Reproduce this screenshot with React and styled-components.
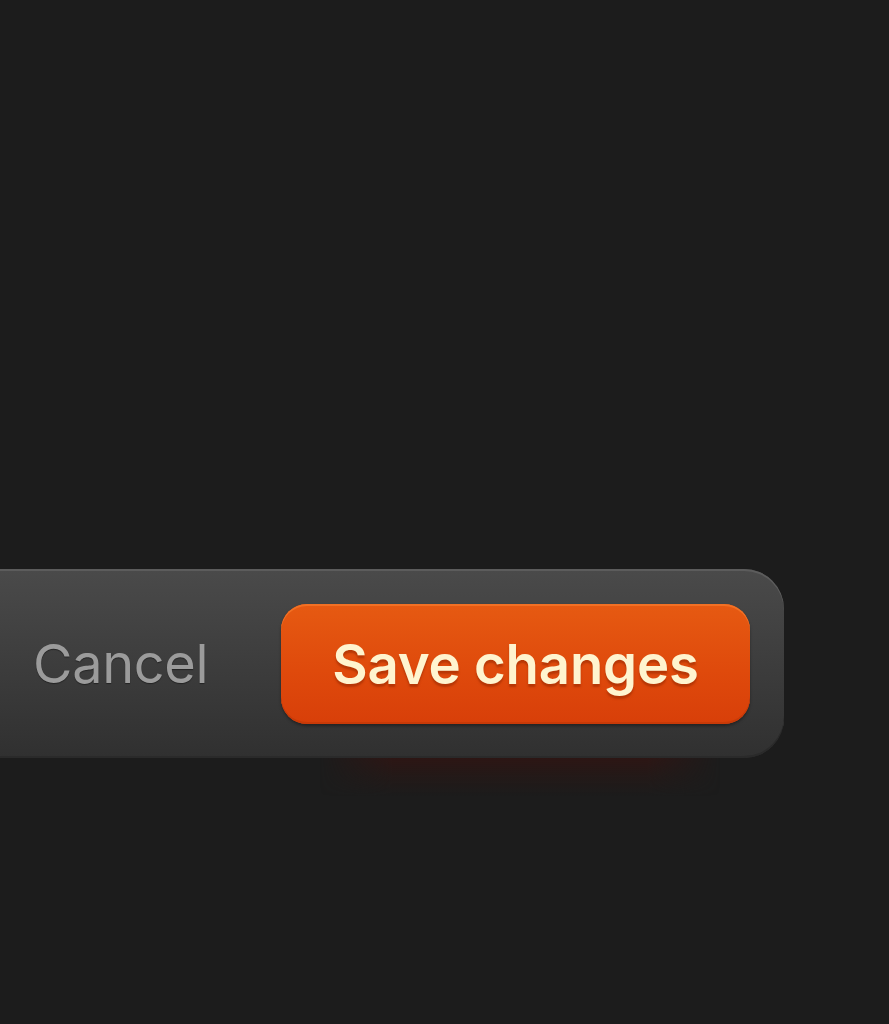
import React from 'react';
import styled, { createGlobalStyle } from 'styled-components';

const GlobalStyle = createGlobalStyle`
    html, body {
        margin: 0;
        padding: 0;
        background: #1c1c1c;
    }
    body {
        font-family: Inter, 'Noto Sans', sans-serif;
        overflow: hidden;
    }
`;

const Page = styled.div`
    width: 889px;
    height: 1024px;
    padding-top: 569px;
    box-sizing: border-box;
    background: #1c1c1c;
`;

const ActionBar = styled.div`
    position: relative;
    margin-left: -60px;
    width: 844px;
    height: 189px;
    box-sizing: border-box;
    display: flex;
    align-items: center;
    justify-content: space-between;
    padding: 0 34px 0 93px;
    border-radius: 0 40px 40px 0;
    background: linear-gradient(180deg, #4a4a4a 0%, #3d3d3d 50%, #303030 100%);
    box-shadow: inset 0 2px 0 #5c5c5c, inset 0 -2px 0 #2a2a2a;
    isolation: isolate;

    &::after {
        content: '';
        position: absolute;
        left: 380px;
        width: 400px;
        top: 189px;
        height: 38px;
        background: linear-gradient(180deg, rgba(46, 22, 20, 0.95) 0%, rgba(40, 24, 22, 0.6) 50%, rgba(28, 28, 28, 0) 100%);
        -webkit-mask-image: linear-gradient(90deg, transparent 0%, #000 18%, #000 82%, transparent 100%);
        mask-image: linear-gradient(90deg, transparent 0%, #000 18%, #000 82%, transparent 100%);
        z-index: -1;
    }
`;

const CancelButton = styled.button`
    background: none;
    border: none;
    padding: 0;
    font-family: Inter, 'Noto Sans', sans-serif;
    font-size: 54px;
    font-weight: 400;
    letter-spacing: -0.3px;
    color: #9b9b9b;
    text-shadow: 0 1px 1px rgba(0, 0, 0, 0.4);
    cursor: pointer;
`;

const SaveButton = styled.button`
    width: 469px;
    height: 120px;
    border: none;
    border-radius: 26px;
    background: linear-gradient(180deg, #e65a12 0%, #df4a0c 55%, #d83f09 100%);
    box-shadow: inset 0 2px 0 #f27024, inset 0 -2px 0 #c83a08, 0 2px 3px rgba(0, 0, 0, 0.35);
    font-family: Inter, 'Noto Sans', sans-serif;
    font-size: 54.5px;
    font-weight: 600;
    letter-spacing: -0.2px;
    color: #fff4cf;
    text-shadow: 0 3px 2px rgba(150, 40, 0, 0.55);
    cursor: pointer;
`;

export default function App() {
    return (
        <>
            <GlobalStyle />
            <Page>
                <ActionBar>
                    <CancelButton>Cancel</CancelButton>
                    <SaveButton>Save changes</SaveButton>
                </ActionBar>
            </Page>
        </>
    );
}
